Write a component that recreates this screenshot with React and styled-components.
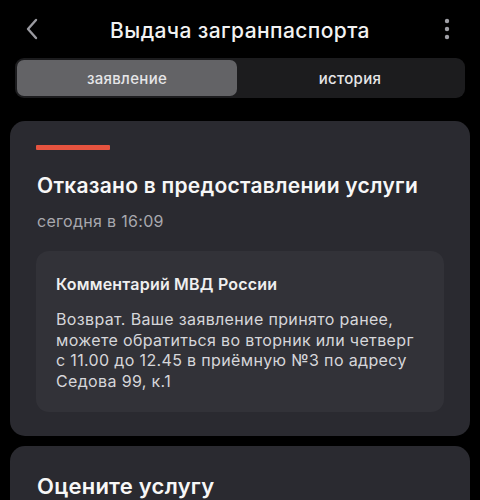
import React from "react";
import styled, { createGlobalStyle } from "styled-components";

const Global = createGlobalStyle`
  html, body { margin: 0; padding: 0; background: #000; }
  body { font-family: Inter, "Noto Sans", sans-serif; color: #fff; -webkit-font-smoothing: antialiased; }
  * { box-sizing: border-box; }
`;

const Screen = styled.div`
  width: 480px;
  height: 500px;
  overflow: hidden;
  background: #000;
  display: flex;
  flex-direction: column;
  & > * { flex-shrink: 0; }
`;

const Header = styled.div`
  height: 58px;
  display: grid;
  grid-template-columns: 58px 1fr 58px;
  align-items: center;
`;

const IconButton = styled.div`
  display: flex;
  align-items: center;
  justify-content: ${(p) => p.$align || "center"};
  padding: ${(p) => p.$pad || "0"};
  height: 100%;
`;

const Title = styled.h1`
  margin: 0;
  text-align: center;
  font-size: 21px;
  font-weight: 500;
  letter-spacing: 0.4px;
  color: #f2f2f2;
  padding-top: 2px;
`;

const Segments = styled.div`
  margin: 0 15px;
  height: 40px;
  background: #1c1c1e;
  border-radius: 9px;
  padding: 2px;
  display: grid;
  grid-template-columns: 220px 1fr;
`;

const Segment = styled.div`
  display: flex;
  align-items: center;
  justify-content: center;
  border-radius: 7px;
  font-size: 15px;
  font-weight: 500;
  letter-spacing: 0.3px;
  color: #e6e6e8;
  background: ${(p) => (p.$active ? "#636366" : "transparent")};
`;

const Card = styled.section`
  margin: ${(p) => p.$mt || 0}px 10px 0;
  background: #2a2a30;
  border-radius: 15px;
  padding: ${(p) => p.$pt || 24}px 26px 24px;
`;

const StatusBar = styled.div`
  width: 74px;
  height: 5px;
  background: #e5533f;
  border-radius: 1px;
`;

const CardTitle = styled.h2`
  margin: ${(p) => p.$mt || 0}px 0 0 1px;
  font-size: ${(p) => p.$size || 21}px;
  line-height: 26px;
  font-weight: 600;
  letter-spacing: 0.25px;
  color: #f7f7f7;
`;

const Meta = styled.div`
  margin-top: 11px;
  font-size: 16px;
  line-height: 22px;
  letter-spacing: 0.3px;
  color: #a8a8ae;
  padding-left: 1px;
`;

const Comment = styled.div`
  margin-top: 19px;
  background: #323238;
  border-radius: 13px;
  padding: 22px 20px 20px;
`;

const CommentHead = styled.div`
  font-size: 16px;
  line-height: 22px;
  font-weight: 600;
  letter-spacing: 0.2px;
  color: #efefef;
`;

const CommentBody = styled.p`
  margin: 14px 0 0;
  font-size: 16px;
  line-height: 20.7px;
  letter-spacing: 0.35px;
  color: #d6d6da;
`;

const Back = () => (
  <svg width="14" height="22" viewBox="0 0 14 22">
    <path d="M11 2 L3 11 L11 20" fill="none" stroke="#9a9aa0" strokeWidth="2.4" strokeLinecap="round" strokeLinejoin="round" />
  </svg>
);

const More = () => (
  <svg width="6" height="22" viewBox="0 0 6 22">
    <circle cx="3" cy="3" r="2.2" fill="#a0a0a6" />
    <circle cx="3" cy="11" r="2.2" fill="#a0a0a6" />
    <circle cx="3" cy="19" r="2.2" fill="#a0a0a6" />
  </svg>
);

export default function App() {
  return (
    <Screen>
      <Global />
      <Header>
        <IconButton $align="flex-start" $pad="0 0 0 25px"><Back /></IconButton>
        <Title>Выдача загранпаспорта</Title>
        <IconButton $align="flex-end" $pad="0 30px 0 0"><More /></IconButton>
      </Header>
      <Segments>
        <Segment $active>заявление</Segment>
        <Segment>история</Segment>
      </Segments>
      <Card $mt={23}>
        <StatusBar />
        <CardTitle $mt={23}>Отказано в предоставлении услуги</CardTitle>
        <Meta>сегодня в 16:09</Meta>
        <Comment>
          <CommentHead>Комментарий МВД России</CommentHead>
          <CommentBody>
            Возврат. Ваше заявление принято ранее, можете обратиться во вторник или четверг с 11.00 до 12.45 в приёмную №3 по адресу Седова 99, к.1
          </CommentBody>
        </Comment>
      </Card>
      <Card $mt={10} $pt={27}>
        <CardTitle $size={22}>Оцените услугу</CardTitle>
      </Card>
    </Screen>
  );
}
